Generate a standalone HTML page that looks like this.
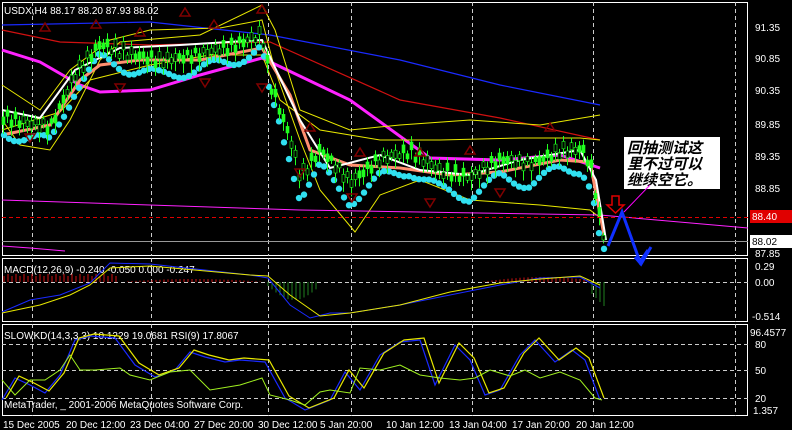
<!DOCTYPE html>
<html><head><meta charset="utf-8"><style>
html,body{margin:0;padding:0;background:#000;width:792px;height:430px;overflow:hidden}
svg{display:block;font-family:"Liberation Sans",sans-serif}
.t{fill:#fff;font-size:10px}
</style></head><body>
<svg id="s" width="792" height="430" viewBox="0 0 792 430" xmlns="http://www.w3.org/2000/svg">
<rect width="792" height="430" fill="#000"/>
<g stroke="#fff" fill="none">
<rect x="2.5" y="2.5" width="745" height="253"/>
<rect x="2.5" y="258.5" width="745" height="63"/>
<rect x="2.5" y="324.5" width="745" height="91"/>
</g>
<g id="grid" stroke="#ccc" stroke-dasharray="4,3" stroke-width="1"></g>
<g id="main"></g>
<g class="t" font-size="10">
<text x="755" y="31" fill="#fff">91.35</text>
<text x="755" y="62" fill="#fff">90.85</text>
<text x="755" y="94" fill="#fff">90.35</text>
<text x="755" y="128" fill="#fff">89.85</text>
<text x="755" y="160" fill="#fff">89.35</text>
<text x="755" y="192" fill="#fff">88.85</text>
<text x="755" y="257" fill="#fff">87.85</text>
<text x="755" y="270" fill="#fff">0.29</text>
<text x="755" y="286" fill="#fff">0.00</text>
<text x="752" y="320" fill="#fff">-0.514</text>
<text x="750" y="336" fill="#fff">96.4577</text>
<text x="755" y="348" fill="#fff">80</text>
<text x="755" y="374" fill="#fff">50</text>
<text x="755" y="402" fill="#fff">20</text>
<text x="753" y="414" fill="#fff">1.357</text>
</g>
<rect x="750" y="210" width="42" height="13" fill="#e00000"/>
<text x="752" y="220" fill="#fff" font-size="10">88.40</text>
<rect x="750" y="235" width="42" height="13" fill="#fff"/>
<text x="752" y="245" fill="#000" font-size="10">88.02</text>
<line x1="2" y1="241.5" x2="748" y2="241.5" stroke="#999"/>
<line x1="2" y1="217.5" x2="748" y2="217.5" stroke="#e00000" stroke-dasharray="4,3"/>
<g class="t" font-size="9.5">
<text x="4" y="14">USDX,H4  88.17 88.20 87.93 88.02</text>
<text x="4" y="273">MACD(12,26,9) -0.240 -0.050 0.000 -0.247</text>
<text x="4" y="339">SLOWKD(14,3,3,3) 10.1229 19.0681  RSI(9) 17.8067</text>
<text x="4" y="408">MetaTrader, _ 2001-2006 MetaQuotes Software Corp.</text>
<text x="3" y="428">15 Dec 2005</text>
<text x="66" y="428">20 Dec 12:00</text>
<text x="130" y="428">23 Dec 04:00</text>
<text x="194" y="428">27 Dec 20:00</text>
<text x="258" y="428">30 Dec 12:00</text>
<text x="320" y="428">5 Jan 20:00</text>
<text x="386" y="428">10 Jan 12:00</text>
<text x="449" y="428">13 Jan 04:00</text>
<text x="512" y="428">17 Jan 20:00</text>
<text x="576" y="428">20 Jan 12:00</text>
</g>
<rect x="624" y="137" width="96" height="52" fill="#fff"/>
<text x="627" y="153" font-size="15" font-weight="bold" font-style="italic" fill="#000" font-family="'Noto Sans CJK SC',sans-serif">回抽测试这</text>
<text x="627" y="169" font-size="15" font-weight="bold" font-style="italic" fill="#000" font-family="'Noto Sans CJK SC',sans-serif">里不过可以</text>
<text x="627" y="185" font-size="15" font-weight="bold" font-style="italic" fill="#000" font-family="'Noto Sans CJK SC',sans-serif">继续空它。</text>
<line x1="650" y1="185" x2="624" y2="212" stroke="#f0f"/>
<polygon points="612,196 619,196 619,205 624,205 615.5,213 607,205 612,205" fill="none" stroke="#e00000" stroke-width="1.5"/>
<polyline points="608,246 622,212 640,262 648,250" fill="none" stroke="#1030ff" stroke-width="3"/>
<polyline points="635,257 641,264 651,247" fill="none" stroke="#1030ff" stroke-width="3"/>
</svg>
<script>
var NS="http://www.w3.org/2000/svg",s=document.getElementById('s'),main=document.getElementById('main'),grid=document.getElementById('grid');
function el(p,t,a){var e=document.createElementNS(NS,t);for(var k in a)e.setAttribute(k,a[k]);p.appendChild(e);return e}
[32,151,268,351,472,593,735].forEach(function(x){
 [[2,256],[258,322],[324,416]].forEach(function(r){el(grid,'line',{x1:x+.5,y1:r[0],x2:x+.5,y2:r[1]})})});
[282,344,370,398].forEach(function(y){el(grid,'line',{x1:2,y1:y+.5,x2:748,y2:y+.5})});
function interp(pts,x){for(var i=1;i<pts.length;i++){if(x<=pts[i][0]){var a=pts[i-1],b=pts[i];return a[1]+(b[1]-a[1])*(x-a[0])/(b[0]-a[0])}}return pts[pts.length-1][1]}
function poly(p,pts,c,w,d){var a={points:pts.map(function(q){return q.join(',')}).join(' '),fill:'none',stroke:c,'stroke-width':w||1};if(d)a['stroke-dasharray']=d;el(p,'polyline',a)}
var price=[[2,118],[30,125],[50,128],[75,75],[100,45],[130,55],[160,62],[200,55],[230,48],[262,35],[270,85],[290,140],[300,178],[320,150],[350,183],[380,160],[410,152],[440,172],[470,178],[500,160],[530,165],[560,152],[582,150],[592,172],[600,225],[606,242]];
poly(main,[[2,25],[150,22],[270,35],[400,60],[500,85],[600,105]],'#1a2aff',1.2);
poly(main,[[2,30],[60,42],[150,45],[270,42],[400,100],[500,118],[600,140]],'#d01010',1.2);
poly(main,[[2,50],[40,62],[80,85],[100,92],[150,90],[200,75],[262,58],[350,100],[430,158],[500,160],[560,155],[600,168]],'#ff22ff',3);
poly(main,[[2,85],[40,110],[70,70],[110,40],[150,30],[220,28],[262,20],[275,70],[300,140],[320,190],[355,232],[380,195],[420,180],[470,200],[540,205],[590,210],[603,220]],'#e8e800',1);
poly(main,[[2,120],[20,145],[50,150],[70,120],[100,60],[120,42],[200,35],[262,5],[275,30],[300,110],[350,130],[400,125],[470,120],[540,125],[600,115]],'#e8e800',1);
poly(main,[[2,130],[60,112],[90,80],[150,65],[210,55],[262,55],[280,100],[320,130],[380,140],[440,140],[520,138],[580,138],[600,140]],'#e8e800',1);
poly(main,[[2,200],[300,210],[600,215],[748,228]],'#ff22ff',1);
poly(main,[[2,135],[50,125],[80,80],[100,65],[140,60],[200,60],[262,48],[290,95],[310,150],[350,165],[400,168],[450,175],[500,172],[560,160],[590,162],[604,235]],'#ff9070',3);
poly(main,[[2,110],[40,118],[75,70],[120,48],[180,45],[262,40],[300,120],[330,168],[380,155],[420,170],[470,175],[520,160],[580,150],[596,180],[606,240]],'#ffffff',2);
for(var x=4;x<606;x+=5){var y=interp(price,x);var yc=y+14+6*Math.sin(x/9);el(main,'circle',{cx:x,cy:(x>280?yc+4:yc),r:3.2,fill:'#30e0f0'});
 if(x>280&&x<600&&x%10==0)el(main,'circle',{cx:x,cy:y-8+5*Math.sin(x/13),r:3.2,fill:'#ff22ff'});}
for(var x=3;x<606;x+=4){var y=interp(price,x)+5*Math.sin(x*0.7);var h=5+7*Math.abs(Math.sin(x*0.37));el(main,'line',{x1:x+.5,y1:y-h,x2:x+.5,y2:y+h,stroke:'#20ff20'});el(main,'rect',{x:x-1,y:y-h/2,width:3,height:h/2+2,fill:Math.sin(x*3)>0?'#20ff20':'#000',stroke:'#20ff20','stroke-width':.6});}
[[45,25],[96,22],[140,30],[185,10],[214,22],[262,7],[310,125],[360,150],[420,150],[470,148],[550,125]].forEach(function(p){el(main,'polygon',{points:(p[0]-5)+','+(p[1]+6)+' '+p[0]+','+(p[1]-2)+' '+(p[0]+5)+','+(p[1]+6),fill:'none',stroke:'#800000','stroke-width':1.5})});
[[30,140],[120,90],[205,85],[262,90],[300,175],[352,200],[430,205],[500,195]].forEach(function(p){el(main,'polygon',{points:(p[0]-5)+','+(p[1]-6)+' '+p[0]+','+(p[1]+2)+' '+(p[0]+5)+','+(p[1]-6),fill:'none',stroke:'#800000','stroke-width':1.5})});
poly(main,[[2,246],[30,248],[65,251]],'#ff22ff',1);
var g=document.createElementNS(NS,'g');s.appendChild(g);
for(var x=4;x<606;x+=4){var v;if(x<118)v=-4-(x%8?2:4);else if(x<268)v=Math.sin((x-118)/48)*-3;else if(x<320)v=4+14*Math.sin((x-268)/52*Math.PI);else if(x<480)v=0;else v=-5*Math.sin((x-480)/125*Math.PI);if(x>590)v=10+(x-590);if(Math.abs(v)>0.5)el(g,'line',{x1:x,y1:282,x2:x,y2:282+v,stroke:v<0?'#d01010':'#208020'});}
poly(g,[[2,312],[30,300],[60,295],[90,283],[110,263],[150,264],[250,275],[268,278],[290,305],[310,318],[330,313],[350,313],[400,305],[450,295],[500,285],[540,278],[580,277],[600,288]],'#1a2aff',1);
poly(g,[[2,313],[40,305],[70,295],[90,285],[110,268],[150,266],[250,275],[268,276],[290,295],[320,316],[350,313],[400,305],[450,292],[500,283],[540,279],[580,276],[600,285]],'#e8e800',1);
var k=[[2,400],[15,378],[30,385],[45,393],[60,375],[75,340],[90,336],[115,338],[135,365],[155,377],[175,370],[190,352],[205,357],[225,362],[240,360],[265,362],[285,398],[305,410],[330,400],[345,372],[360,390],[380,355],[400,342],[420,340],[435,385],[455,345],[470,360],[485,395],[500,390],[520,355],[535,340],[555,362],[572,350],[585,360],[600,400]];
poly(s,k,'#1a2aff',1.2);poly(s,k.map(function(p){return[p[0]+4,p[1]-2]}),'#e8e800',1.2);
var r=[[2,380],[15,395],[30,380],[45,380],[60,370],[70,355],[80,370],[95,370],[120,368],[130,375],[150,380],[170,372],[190,370],[210,390],[240,385],[262,378],[270,395],[290,400],[305,405],[320,392],[330,390],[350,393],[360,368],[380,370],[400,365],[420,375],[440,378],[460,380],[475,378],[490,370],[510,376],[525,370],[540,378],[560,372],[580,380],[595,398],[602,400]];
poly(s,r,'#a0f020',1);
</script>
</body></html>
